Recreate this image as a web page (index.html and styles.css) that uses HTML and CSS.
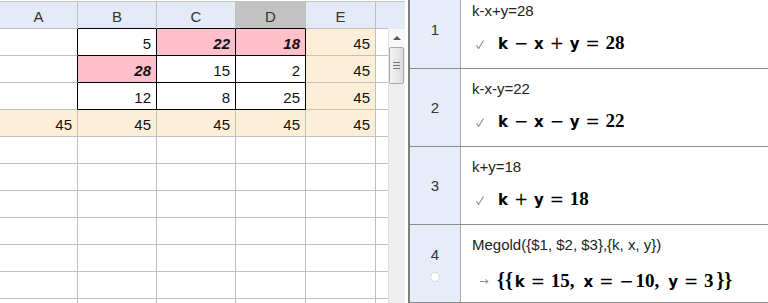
FILE: index.html
```html
<!DOCTYPE html>
<html lang="hu">
<head>
    <meta charset="UTF-8">
    <title>Táblázat és Algebra</title>
    <link rel="stylesheet" href="styles.css">
</head>
<body>
<div class="app">
    <div class="sheet">
        <div class="colhead">
            <div class="hc">A</div><div class="hc blk-b">B</div><div class="hc blk-b">C</div><div class="hc sel blk-b">D</div><div class="hc">E</div><div class="hc"></div><div class="corner"></div>
        </div>
        <div class="sheet-body">
            <div class="cells">
                <div class="row">
                    <div class="cell blk-r"></div>
                    <div class="cell blk">5</div>
                    <div class="cell blk pink bi">22</div>
                    <div class="cell blk pink bi">18</div>
                    <div class="cell sum">45</div>
                    <div class="cell"></div>
                </div>
                <div class="row">
                    <div class="cell blk-r"></div>
                    <div class="cell blk pink bi">28</div>
                    <div class="cell blk">15</div>
                    <div class="cell blk">2</div>
                    <div class="cell sum">45</div>
                    <div class="cell"></div>
                </div>
                <div class="row">
                    <div class="cell blk-r"></div>
                    <div class="cell blk">12</div>
                    <div class="cell blk">8</div>
                    <div class="cell blk">25</div>
                    <div class="cell sum">45</div>
                    <div class="cell"></div>
                </div>
                <div class="row">
                    <div class="cell sum">45</div>
                    <div class="cell sum">45</div>
                    <div class="cell sum">45</div>
                    <div class="cell sum">45</div>
                    <div class="cell sum">45</div>
                    <div class="cell"></div>
                </div>
                <div class="row"><div class="cell"></div><div class="cell"></div><div class="cell"></div><div class="cell"></div><div class="cell"></div><div class="cell"></div></div>
                <div class="row"><div class="cell"></div><div class="cell"></div><div class="cell"></div><div class="cell"></div><div class="cell"></div><div class="cell"></div></div>
                <div class="row"><div class="cell"></div><div class="cell"></div><div class="cell"></div><div class="cell"></div><div class="cell"></div><div class="cell"></div></div>
                <div class="row"><div class="cell"></div><div class="cell"></div><div class="cell"></div><div class="cell"></div><div class="cell"></div><div class="cell"></div></div>
                <div class="row"><div class="cell"></div><div class="cell"></div><div class="cell"></div><div class="cell"></div><div class="cell"></div><div class="cell"></div></div>
                <div class="row"><div class="cell"></div><div class="cell"></div><div class="cell"></div><div class="cell"></div><div class="cell"></div><div class="cell"></div></div>
                <div class="row"><div class="cell"></div><div class="cell"></div><div class="cell"></div><div class="cell"></div><div class="cell"></div><div class="cell"></div></div>
            </div>
            <div class="vscroll">
                <div class="vs-up"><span class="tri"></span></div>
                <div class="vs-thumb"><span class="grip"></span><span class="grip"></span><span class="grip"></span></div>
            </div>
        </div>
    </div>

    <div class="algebra">
        <div class="av-row first">
            <div class="av-num">1</div>
            <div class="av-main">
                <div class="av-input">k-x+y=28</div>
                <div class="av-out"><svg class="mark" width="8" height="9" viewBox="0 0 8 9"><path d="M0.5 5.2 L2.6 8.5 L7.5 0.5" fill="none" stroke="#8c8c8c" stroke-width="1.1"/></svg><span class="v">k</span><span class="op">−</span><span class="v">x</span><span class="op">+</span><span class="v">y</span><span class="op">=</span><span class="n">28</span></div>
            </div>
        </div>
        <div class="av-row">
            <div class="av-num">2</div>
            <div class="av-main">
                <div class="av-input">k-x-y=22</div>
                <div class="av-out"><svg class="mark" width="8" height="9" viewBox="0 0 8 9"><path d="M0.5 5.2 L2.6 8.5 L7.5 0.5" fill="none" stroke="#8c8c8c" stroke-width="1.1"/></svg><span class="v">k</span><span class="op">−</span><span class="v">x</span><span class="op">−</span><span class="v">y</span><span class="op">=</span><span class="n">22</span></div>
            </div>
        </div>
        <div class="av-row">
            <div class="av-num">3</div>
            <div class="av-main">
                <div class="av-input">k+y=18</div>
                <div class="av-out"><svg class="mark" width="8" height="9" viewBox="0 0 8 9"><path d="M0.5 5.2 L2.6 8.5 L7.5 0.5" fill="none" stroke="#8c8c8c" stroke-width="1.1"/></svg><span class="v">k</span><span class="op">+</span><span class="v">y</span><span class="op">=</span><span class="n">18</span></div>
            </div>
        </div>
        <div class="av-row">
            <div class="av-num">4<span class="dot"></span></div>
            <div class="av-main">
                <div class="av-input">Megold({$1, $2, $3},{k, x, y})</div>
                <div class="av-out last"><svg class="arrow" width="9" height="5" viewBox="0 0 9 5"><path d="M0 2.5 H7.5 M5.5 0.5 L8.2 2.5 L5.5 4.5" fill="none" stroke="#8a8a8a" stroke-width="1"/></svg><span class="br open">{{</span><span class="v">k</span><span class="op">=</span><span class="n">15</span><span class="cm">,</span><span class="v">x</span><span class="op">=</span><span class="neg">−</span><span class="n">10</span><span class="cm">,</span><span class="v">y</span><span class="op">=</span><span class="n">3</span><span class="br close">}}</span></div>
            </div>
        </div>
    </div>
</div>
</body>
</html>
```

FILE: styles.css
```css
html,body{
    height: 100%;
}
*{
    margin:0;
    padding:0;
    box-sizing: border-box;
}
body{
    background: #fff;
    font-family: "Liberation Sans", Arial, sans-serif;
    overflow: hidden;
}
.app{
    display: flex;
    width: 768px;
    height: 303px;
}

/* spreadsheet */
.sheet{
    width: 410px;
    height: 303px;
    padding-top: 1px;
    border-right: 2px solid #7e7e7e;
    overflow: hidden;
    display: flex;
    flex-direction: column;
}
.colhead{
    display: grid;
    grid-template-columns: 78px 79px 79px 70px 70px 12px 17px;
    width: 405px;
    border-top: 1px solid #c4c4c4;
    background: #e4ebf6;
}
.hc{
    height: 27px;
    padding-top: 3px;
    line-height: 23px;
    text-align: center;
    font-size: 15px;
    color: #333;
    border-right: 1px solid #c0c0c0;
    border-bottom: 1px solid #c0c0c0;
}
.hc:nth-child(6){
    border-right: none;
}
.hc.sel{
    background: #c2c2c2;
}
.sheet-body{
    display: flex;
    flex: 1;
}
.cells{
    width: 388px;
}
.row{
    display: grid;
    grid-template-columns: 78px 79px 79px 70px 70px 12px;
}
.cell{
    height: 27px;
    padding: 3px 5px 0 0;
    line-height: 23px;
    text-align: right;
    font-size: 15px;
    color: #111;
    border-right: 1px solid #c0c0c0;
    border-bottom: 1px solid #c0c0c0;
    white-space: nowrap;
    overflow: hidden;
}
.cell:last-child{
    border-right: none;
}
.blk{
    border-right-color: #000;
    border-bottom-color: #000;
}
.blk-r{
    border-right-color: #000;
}
.blk-b{
    border-bottom-color: #000;
}
.pink{
    background: #ffc0cb;
}
.sum{
    background: #fdefd7;
}
.bi{
    font-weight: bold;
    font-style: italic;
}

/* scrollbar */
.vscroll{
    width: 17px;
    background: #eeeeee;
    border-left: 1px solid #e2e2e2;
}
.vs-up{
    height: 18px;
    background: #f7f7f7;
    display: flex;
    justify-content: center;
    align-items: center;
}
.tri{
    width: 0;
    height: 0;
    border-left: 4px solid transparent;
    border-right: 4px solid transparent;
    border-bottom: 4px solid #555;
}
.vs-thumb{
    width: 15px;
    height: 37px;
    border: 1px solid #a9a9a9;
    border-radius: 2px;
    background: linear-gradient(to right, #f4f4f4, #dcdcdc);
    display: flex;
    flex-direction: column;
    justify-content: center;
    align-items: center;
    gap: 2px;
}
.grip{
    width: 7px;
    height: 1px;
    background: #777;
}

/* algebra view */
.algebra{
    flex: 1;
    height: 303px;
    overflow: hidden;
    background: #fff;
}
.av-row{
    display: flex;
    height: 78px;
    border-bottom: 1px solid #8c8c8c;
}
.av-row.first{
    margin-top: -9px;
}
.av-num{
    width: 51px;
    flex-shrink: 0;
    background: #e6edf8;
    border-right: 1px solid #a8a8a8;
    display: flex;
    flex-direction: column;
    align-items: center;
    justify-content: center;
    gap: 9px;
    font-size: 15px;
    line-height: 17px;
    color: #333;
}
.dot{
    display: block;
    width: 10px;
    height: 10px;
    border-radius: 50%;
    background: #fff;
    border: 1px solid #d4d4d4;
}
.av-main{
    flex: 1;
    padding: 11px 0 0 11px;
}
.av-input{
    font-size: 15px;
    line-height: 18px;
    color: #222;
    white-space: nowrap;
}
.av-out{
    margin-top: 10px;
    line-height: 26px;
    font-family: "Liberation Serif", serif;
    font-size: 19px;
    color: #000;
    white-space: nowrap;
}
.av-out.last{
    margin-top: 13px;
}
.mark{
    margin: 0 14px 0 4px;
    vertical-align: 0;
}
.arrow{
    margin: 0 8px 0 8px;
    vertical-align: 3px;
}
.v{
    font-family: "DejaVu Sans", sans-serif;
    font-weight: bold;
    font-size: 15px;
}
.n{
    font-family: "Liberation Serif", serif;
    font-weight: bold;
    font-size: 19px;
}
.op{
    display: inline-block;
    width: 14px;
    margin: 0 6px;
    text-align: center;
    font-family: "DejaVu Sans", sans-serif;
    font-size: 17px;
    font-weight: normal;
}
.neg{
    font-family: "DejaVu Sans", sans-serif;
    font-size: 17px;
    margin-right: 2px;
}
.cm{
    font-family: "Liberation Serif", serif;
    font-weight: bold;
    margin-right: 9px;
}
.br{
    font-family: "Liberation Serif", serif;
    font-weight: bold;
    font-size: 20px;
}
.br.open{
    margin-right: 2px;
}
.br.close{
    margin-left: 3px;
}
```
